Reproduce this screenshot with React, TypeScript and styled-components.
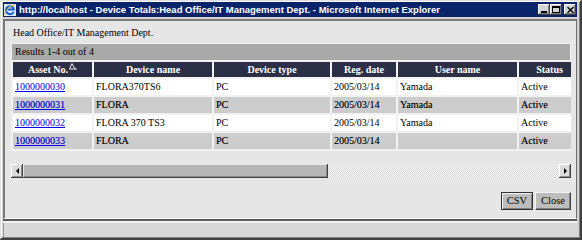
import React from 'react';
import styled, { createGlobalStyle } from 'styled-components';

const GlobalStyle = createGlobalStyle`
  html, body {
    margin: 0;
    padding: 0;
    background: #d4d4d4;
  }
  body {
    font-family: "Liberation Serif", "Times New Roman", serif;
  }
`;

const Window = styled.div`
  box-sizing: border-box;
  width: 582px;
  height: 240px;
  display: flex;
  flex-direction: column;
  background: #d4d4d4;
  border-style: solid;
  border-width: 1px 2px 2px 1px;
  border-color: #e0e0e0 #404040 #404040 #e0e0e0;
  box-shadow: inset 1px 1px #ffffff, inset -1px -1px #808080;
  padding: 1px 3px 1px 2px;
`;

const TitleBar = styled.div`
  height: 15px;
  flex: none;
  display: flex;
  align-items: center;
  gap: 3px;
  padding: 0 1px;
  background: #0a246a;
`;

const TitleText = styled.span`
  color: #ffffff;
  font-family: "Liberation Sans", Arial, sans-serif;
  font-weight: bold;
  font-size: 9.5px;
  white-space: nowrap;
`;

const Controls = styled.div`
  margin-left: auto;
  display: flex;
  align-items: center;
`;

const CtrlButton = styled.div<{ $spaced?: boolean }>`
  width: 12px;
  height: 11px;
  margin-left: ${(p) => (p.$spaced ? '2px' : '0')};
  display: flex;
  align-items: center;
  justify-content: center;
  background: #d4d4d4;
  box-shadow: inset -1px -1px #404040, inset 1px 1px #ffffff, inset -2px -2px #808080;
`;

const Content = styled.div`
  flex: 1;
  margin-top: 2px;
  display: flex;
  flex-direction: column;
  background: #e6e6e6;
  border-style: solid;
  border-width: 2px 1px 1px 2px;
  border-color: #7a7a7a #6e6e6e #f8f8f8 #7a7a7a;
  padding: 5px 5px 0 6px;
`;

const DeptLine = styled.div`
  height: 13px;
  line-height: 13px;
  font-size: 10px;
  margin: 0 0 4px 2px;
  color: #000;
`;

const Panel = styled.div`
  background: #f2f2f2;
  overflow: hidden;
  padding: 1px 1px 0;
`;

const ResultsBar = styled.div`
  height: 16px;
  line-height: 16px;
  padding-left: 3px;
  background: #a9a9a9;
  font-size: 10px;
  color: #000;
`;

const Grid = styled.table`
  table-layout: fixed;
  width: 571px;
  margin-left: -1px;
  border-collapse: separate;
  border-spacing: 2px;
  font-size: 10px;
`;

const Col = styled.col<{ $w: number }>`
  width: ${(p) => p.$w}px;
`;

const HeadCell = styled.th`
  height: 15px;
  padding: 0;
  background: #2c3047;
  color: #ffffff;
  font-weight: bold;
  text-align: center;
  white-space: nowrap;
  line-height: 15px;
`;

const Row = styled.tr<{ $shade: boolean }>`
  background: ${(p) => (p.$shade ? '#cccccc' : '#ffffff')};
  text-shadow: ${(p) => (p.$shade ? '0.3px 0 0 rgba(0, 0, 0, 0.45)' : 'none')};
`;

const Cell = styled.td`
  height: 16px;
  padding: 0 0 0 2px;
  line-height: 16px;
  white-space: nowrap;
  overflow: hidden;
  color: #000;
`;

const AssetLink = styled.a`
  color: #0000ee;
  text-decoration: underline;
`;

const SortMark = styled.svg`
  margin-left: 1px;
  vertical-align: 3px;
`;

const HScroll = styled.div`
  height: 14px;
  margin-top: 13px;
  display: flex;
  background: repeating-conic-gradient(#dadada 0 25%, #f4f4f4 0 50%) 0 0 / 2px 2px;
`;

const ScrollButton = styled.div`
  width: 12px;
  flex: none;
  display: flex;
  align-items: center;
  justify-content: center;
  background: #dcdcdc;
  box-shadow: inset -1px -1px #404040, inset 1px 1px #ffffff, inset -2px -2px #909090;
`;

const Thumb = styled.div`
  flex: none;
  background: #b6b6b6;
  box-shadow: inset -1px -1px #404040, inset 1px 1px #e8e8e8, inset -2px -2px #8a8a8a;
`;

const Track = styled.div`
  flex: 1;
`;

const Actions = styled.div`
  display: flex;
  justify-content: flex-end;
  gap: 2px;
  margin-top: 14px;
`;

const ActionButton = styled.button<{ $primary?: boolean }>`
  height: 18px;
  padding: 0 5px;
  margin: 0;
  background: #bdbdbd;
  border: 1px solid;
  border-color: ${(p) => (p.$primary ? '#303030' : '#f4f4f4 #404040 #404040 #f4f4f4')};
  box-shadow: ${(p) =>
    p.$primary ? 'inset 1px 1px #f4f4f4, inset -1px -1px #808080' : 'inset -1px -1px #808080'};
  font-family: "Liberation Serif", serif;
  font-size: 10.5px;
  color: #000;
  line-height: 14px;
`;

const StatusSep = styled.div`
  height: 2px;
  flex: none;
  background: #5c5c5c;
`;

const StatusBar = styled.div`
  height: 16px;
  flex: none;
  background: #d8d8d8;
  box-shadow: inset 0 2px #f2f2f2, inset 1px 0 #9a9a9a;
`;

const IeIcon = () => (
  <svg width="12" height="12" viewBox="0 0 12 12">
    <rect x="0" y="0" width="12" height="12" fill="#dfe8f8" />
    <path d="M9.6 7.8 A4 4 0 1 1 9.9 5.6 H3.4" stroke="#1a5fd0" strokeWidth="2" fill="none" />
    <path d="M1 11 C0.5 7 5 2 11 0.8" stroke="#e8b820" strokeWidth="1" fill="none" />
  </svg>
);

const rows = [
  { no: '1000000030', name: 'FLORA370TS6', type: 'PC', date: '2005/03/14', user: 'Yamada', status: 'Active' },
  { no: '1000000031', name: 'FLORA', type: 'PC', date: '2005/03/14', user: 'Yamada', status: 'Active' },
  { no: '1000000032', name: 'FLORA 370 TS3', type: 'PC', date: '2005/03/14', user: 'Yamada', status: 'Active' },
  { no: '1000000033', name: 'FLORA', type: 'PC', date: '2005/03/14', user: '', status: 'Active' },
];

const widths = [79, 118, 116, 64, 119, 61];

export default function App() {
  return (
    <>
      <GlobalStyle />
      <Window>
        <TitleBar>
          <IeIcon />
          <TitleText>
            http://localhost - Device Totals:Head Office/IT Management Dept. - Microsoft Internet Explorer
          </TitleText>
          <Controls>
            <CtrlButton>
              <svg width="6" height="7" viewBox="0 0 6 7">
                <rect x="0" y="5" width="6" height="2" fill="#000" />
              </svg>
            </CtrlButton>
            <CtrlButton>
              <svg width="8" height="7" viewBox="0 0 8 7">
                <rect x="0.5" y="0.5" width="7" height="6" fill="none" stroke="#000" />
                <rect x="0" y="0" width="8" height="2" fill="#000" />
              </svg>
            </CtrlButton>
            <CtrlButton $spaced>
              <svg width="7" height="6" viewBox="0 0 7 6">
                <path d="M0.5 0 L6.5 6 M6.5 0 L0.5 6" stroke="#000" strokeWidth="1.4" />
              </svg>
            </CtrlButton>
          </Controls>
        </TitleBar>

        <Content>
          <DeptLine>Head Office/IT Management Dept.</DeptLine>
          <Panel>
            <ResultsBar>Results 1-4 out of 4</ResultsBar>
            <Grid>
              <colgroup>
                {widths.map((w, i) => (
                  <Col key={i} $w={w} />
                ))}
              </colgroup>
              <thead>
                <tr>
                  <HeadCell>
                    Asset No.
                    <SortMark width="8" height="7" viewBox="0 0 8 7">
                      <path d="M3 0.5 L6 6 H0.5 Z M6 6 H8" stroke="#fff" strokeWidth="0.9" fill="none" />
                    </SortMark>
                  </HeadCell>
                  <HeadCell>Device name</HeadCell>
                  <HeadCell>Device type</HeadCell>
                  <HeadCell>Reg. date</HeadCell>
                  <HeadCell>User name</HeadCell>
                  <HeadCell>Status</HeadCell>
                </tr>
              </thead>
              <tbody>
                {rows.map((r, i) => (
                  <Row key={r.no} $shade={i % 2 === 1}>
                    <Cell>
                      <AssetLink href="#">{r.no}</AssetLink>
                    </Cell>
                    <Cell>{r.name}</Cell>
                    <Cell>{r.type}</Cell>
                    <Cell>{r.date}</Cell>
                    <Cell>{r.user}</Cell>
                    <Cell>{r.status}</Cell>
                  </Row>
                ))}
              </tbody>
            </Grid>
          </Panel>

          <HScroll>
            <ScrollButton>
              <svg width="3" height="6" viewBox="0 0 3 6">
                <path d="M3 0 V6 L0 3 Z" fill="#000" />
              </svg>
            </ScrollButton>
            <Thumb style={{ width: 305 }} />
            <Track />
            <ScrollButton>
              <svg width="3" height="6" viewBox="0 0 3 6">
                <path d="M0 0 V6 L3 3 Z" fill="#000" />
              </svg>
            </ScrollButton>
          </HScroll>

          <Actions>
            <ActionButton $primary>CSV</ActionButton>
            <ActionButton>Close</ActionButton>
          </Actions>
        </Content>

        <StatusSep />
        <StatusBar />
      </Window>
    </>
  );
}
